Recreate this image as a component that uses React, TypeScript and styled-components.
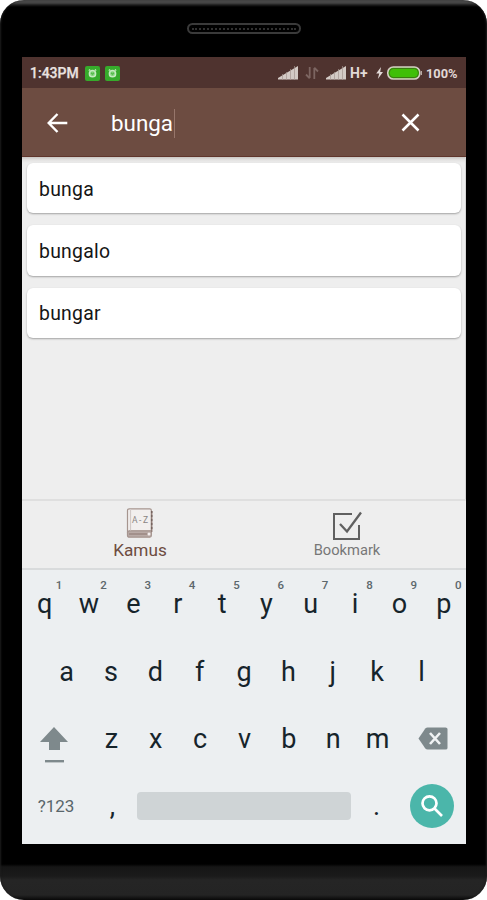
import React from "react";
import styled, { createGlobalStyle } from "styled-components";

const Global = createGlobalStyle`
  * { box-sizing: border-box; }
  body { margin: 0; background: #fff; font-family: Roboto, "Liberation Sans", sans-serif; }
`;

const Phone = styled.div`
  width: 487px;
  height: 900px;
  padding: 0 21px 0 22px;
  border-radius: 24px;
  overflow: hidden;
  background: linear-gradient(180deg, #4a4a4a 0, #444 3px, #1c1c1c 5px, #000 7px, #000 864px, #161616 867px, #1a1a1a 876px, #252525 880px, #242424 895px, #080808 900px);
  box-shadow: inset 2px 0 2px -1px #1d1d1d, inset -2px 0 2px -1px #1d1d1d;
  display: flex;
  flex-direction: column;
`;

const TopBezel = styled.div`
  height: 57px;
  flex: none;
  display: flex;
  justify-content: center;
  padding-top: 23px;
`;

const Speaker = styled.div`
  width: 114px;
  height: 11px;
  border: 2px solid #3a3a3a;
  border-radius: 6px;
  padding: 3px 3px 0;
  &::before {
    content: "";
    display: block;
    border-top: 2px dotted #303030;
  }
`;

const Screen = styled.main`
  width: 444px;
  height: 787px;
  flex: none;
  display: flex;
  flex-direction: column;
  background: #eee;
`;

const StatusBar = styled.header`
  height: 31px;
  flex: none;
  display: flex;
  align-items: center;
  padding: 1px 8px 0 8px;
  background: #4f332f;
  color: #e2d9d7;
  font-size: 13.3px;
  font-weight: 700;
  svg { display: block; flex: none; }
`;

const Clock = styled.span`
  width: 55px;
  color: #e9e2e0;
  font-weight: 500;
  font-size: 14px;
  -webkit-text-stroke: 0.25px #e9e2e0;
`;

const Notifications = styled.div`
  display: flex;
  gap: 5px;
  flex: 1;
`;

const StatusIcons = styled.div`
  display: flex;
  align-items: center;
  width: 180px;
`;

const StatusGap = styled.span`
  display: flex;
  justify-content: center;
  width: 28px;
`;

const Network = styled.span`
  width: 30px;
  flex: none;
  padding-left: 4px;
  font-size: 14px;
`;

const Percent = styled.span`
  padding-left: 4px;
  font-size: 12.8px;
`;

const SearchBar = styled.div`
  height: 69px;
  flex: none;
  display: flex;
  align-items: center;
  background: #6d4c41;
  border-bottom: 1px solid #5f352b;
  color: #fff;
  padding: 1px 46px 0 24px;
  svg { display: block; flex: none; }
`;

const Query = styled.div`
  flex: 1;
  display: flex;
  align-items: center;
  margin-left: 42px;
  padding-top: 1px;
  font-size: 22.4px;
  line-height: 28px;
  &::after {
    content: "";
    width: 1px;
    height: 29px;
    margin-left: 1px;
    background: #97766b;
  }
`;

const Results = styled.section`
  flex: 1;
  padding: 6px 4px 0 5px;
  display: flex;
  flex-direction: column;
  gap: 12px;
  background: linear-gradient(#c9c6c3 0, #e4e3e2 3px, #eee 6px);
  border-right: 1px solid #d5d5d5;
`;

const Card = styled.div`
  height: 50.3px;
  flex: none;
  display: flex;
  align-items: center;
  padding: 2px 12px 0;
  border-radius: 6px;
  background: #fff;
  box-shadow: 0 1px 2px rgba(0, 0, 0, 0.32);
  color: #151515;
  font-size: 19.4px;
  letter-spacing: 0.25px;
`;

const Tabs = styled.nav`
  height: 71px;
  flex: none;
  display: grid;
  grid-template-columns: 236px 178px;
  border-top: 2px solid #dfdfdf;
  border-bottom: 2px solid #d9dbdc;
  background: #eee;
`;

const Tab = styled.div<{ $active?: boolean }>`
  display: flex;
  flex-direction: column;
  align-items: center;
  padding-top: ${(p) => (p.$active ? "6px" : "10px")};
  gap: 1px;
  color: ${(p) => (p.$active ? "#6d4c41" : "#777")};
  font-size: ${(p) => (p.$active ? "17.2px" : "14.7px")};
  line-height: ${(p) => (p.$active ? "20px" : "17px")};
  svg { display: block; }
`;

const Keyboard = styled.section`
  height: 274px;
  flex: none;
  display: grid;
  grid-template-rows: 68px 67px 67px 72px;
  background: #eceff1;
  color: #16242b;
`;

const KeyRow = styled.div<{ $inset?: boolean }>`
  display: flex;
  padding: 0 ${(p) => (p.$inset ? "22px" : "0")};
`;

const Key = styled.div<{ $wide?: boolean }>`
  position: relative;
  width: ${(p) => (p.$wide ? "66.8px" : "44.35px")};
  flex: none;
  display: flex;
  justify-content: center;
  align-items: center;
  padding-left: 1px;
  font-size: 27px;
  svg { display: block; }
`;

const Hint = styled.sup`
  position: absolute;
  right: 4px;
  top: 9px;
  color: #5c676c;
  font-size: 11.5px;
  font-weight: 500;
  line-height: 13px;
`;

const ShiftSlot = styled.span`
  padding: 12px 4px 0 0;
`;

const BottomRow = styled.div`
  display: flex;
  align-items: center;
  padding: 0 12px 5px 0;
`;

const SymbolKey = styled.div`
  width: 68px;
  text-align: center;
  color: #59666b;
  font-size: 17px;
`;

const Punctuation = styled.div<{ $width: number }>`
  width: ${(p) => p.$width}px;
  padding: 1px 2px 0 0;
  text-align: center;
  font-size: 27px;
  line-height: 34px;
`;

const SpaceBar = styled.div`
  width: 214px;
  height: 28px;
  border-radius: 4px;
  background: #cfd4d6;
`;

const SearchKey = styled.button`
  width: 44px;
  height: 44px;
  margin-left: auto;
  padding: 0;
  border: 0;
  border-radius: 50%;
  display: grid;
  place-items: center;
  background: #4bb6aa;
`;

const AlarmBadge = () => (
  <svg width="15" height="15" viewBox="0 0 15 15">
    <rect width="15" height="15" rx="2" fill="#36ab2b" />
    <circle cx="7.5" cy="7.7" r="3.1" fill="#7fd277" stroke="#c6ebc0" strokeWidth="1.5" />
    <path d="M3.8 4.6 5 3.4M11.2 4.6 10 3.4" stroke="#c6ebc0" strokeWidth="1.3" />
    <path d="M6.2 7 7.5 8 8.8 7" stroke="#36ab2b" fill="none" />
  </svg>
);

const Signal = () => (
  <svg width="20" height="14" viewBox="0 0 20 14">
    <path d="M0 13.5V12L20 0v13.5z" fill="#d3cac5" />
    <path d="M4.5 8v6M8.5 6v8M12.5 3v11M16.5 0v14" stroke="#a3958f" strokeWidth=".7" />
  </svg>
);

const Transfer = () => (
  <svg width="14" height="14" viewBox="0 0 14 14" fill="none" stroke="#7c6561" strokeWidth="1.8">
    <path d="M4.7 1v11M1 8.5l3.7 3.8M9.3 13V2M13 5.5 9.3 1.7" />
  </svg>
);

const Battery = () => (
  <svg width="46" height="14" viewBox="0 0 46 14">
    <path d="M5 1 .2 7.5h3L1.8 13 7 6H4.2z" fill="#e2d9d7" />
    <rect x="11.8" y="1" width="32" height="12" rx="5.5" fill="#40bf08" stroke="#d5cbc5" strokeWidth="1.6" />
    <rect x="13.3" y="2.5" width="29" height="9" rx="4" fill="none" stroke="#3b5c18" strokeWidth=".7" />
    <path d="M45.3 5v4" stroke="#d5cbc5" />
  </svg>
);

const BackArrow = () => (
  <svg width="23" height="22" viewBox="0 0 23 22" fill="none" stroke="#fff" strokeWidth="2.4">
    <path d="M21.3 11H3.5M11.5 2 2.7 11l8.8 9" />
  </svg>
);

const Close = () => (
  <svg width="19" height="19" viewBox="0 0 19 19" stroke="#fff" strokeWidth="2.5">
    <path d="m1.5 1.5 16 16M17.5 1.5l-16 16" />
  </svg>
);

const Dictionary = () => (
  <svg width="28" height="32" viewBox="0 0 28 32" fill="none" stroke="#a6958f" strokeWidth="1.2">
    <path d="M3.2 1.8h20.6a1.5 1.5 0 0 1 1.5 1.5v20.5H3.5a2.2 2.2 0 0 0-2 2V3.5a1.7 1.7 0 0 1 1.7-1.7z" fill="#f2efee" />
    <path d="M4.5 2v22" stroke="#d2cac8" />
    <path d="M1.5 25.5v3a1.7 1.7 0 0 0 1.7 1.7h20.6a2 2 0 0 0 1.6-2V24H3.4a1.9 1.9 0 0 0-1.9 1.5z" fill="#b9aaa6" />
    <path d="M3 27h18.5M25.8 4v21" stroke="#8c7771" />
    <path d="M25.7 4v20" stroke="#75645f" strokeWidth="1.5" strokeDasharray="2 2" />
    <circle cx="23" cy="27" r="1.5" fill="#f4eeee" stroke="none" />
    <text x="6" y="15.5" fill="#8a8583" stroke="none" fontSize="8.5" fontFamily="Roboto" textLength="16">A-Z</text>
  </svg>
);

const Bookmark = () => (
  <svg width="32" height="30" viewBox="0 0 32 30" fill="none" stroke="#606060" strokeWidth="2">
    <path d="M21 3H3v25h25V14" />
    <path d="m9 13 7 7.5L30 1.5" strokeWidth="2.3" />
  </svg>
);

const Shift = () => (
  <svg width="30" height="38" viewBox="0 0 30 38" fill="#7e898c">
    <path d="M15 1 29 16h-8v8H10v-8H1z" />
    <path d="M6 34h19v2.4H6z" />
  </svg>
);

const Backspace = () => (
  <svg width="30" height="23" viewBox="0 0 30 23">
    <path d="m.5 11.5 6.8-10Q8.3.5 9.5.5h18Q29.5.5 29.5 2v19q0 1.5-2 1.5h-18q-1.2 0-2.2-1z" fill="#7e898c" />
    <path d="m12 6 10 11M22 6 12 17" stroke="#f0f3f4" strokeWidth="2.6" />
  </svg>
);

const Magnifier = () => (
  <svg width="24" height="24" viewBox="0 0 24 24" fill="none" stroke="#fff" strokeWidth="2.7">
    <circle cx="9.5" cy="9.3" r="7" />
    <path d="m14.5 14.5 7.5 7.5" />
  </svg>
);

export default function App() {
  return (
    <>
      <Global />
      <Phone>
        <TopBezel><Speaker /></TopBezel>
        <Screen>
          <StatusBar>
            <Clock>1:43PM</Clock>
            <Notifications><AlarmBadge /><AlarmBadge /></Notifications>
            <StatusIcons>
              <Signal />
              <StatusGap><Transfer /></StatusGap>
              <Signal />
              <Network>H+</Network>
              <Battery />
              <Percent>100%</Percent>
            </StatusIcons>
          </StatusBar>
          <SearchBar><BackArrow /><Query>bunga</Query><Close /></SearchBar>
          <Results>
            {["bunga", "bungalo", "bungar"].map((word) => <Card key={word}>{word}</Card>)}
          </Results>
          <Tabs>
            <Tab $active><Dictionary /><span>Kamus</span></Tab>
            <Tab><Bookmark /><span>Bookmark</span></Tab>
          </Tabs>
          <Keyboard>
            <KeyRow>
              {"qwertyuiop".split("").map((k, i) => <Key key={k}>{k}<Hint>{(i + 1) % 10}</Hint></Key>)}
            </KeyRow>
            <KeyRow $inset>{"asdfghjkl".split("").map((k) => <Key key={k}>{k}</Key>)}</KeyRow>
            <KeyRow>
              <Key $wide><ShiftSlot><Shift /></ShiftSlot></Key>
              {"zxcvbnm".split("").map((k) => <Key key={k}>{k}</Key>)}
              <Key $wide><Backspace /></Key>
            </KeyRow>
            <BottomRow>
              <SymbolKey>?123</SymbolKey>
              <Punctuation $width={47}>,</Punctuation>
              <SpaceBar />
              <Punctuation $width={53}>.</Punctuation>
              <SearchKey aria-label="Search"><Magnifier /></SearchKey>
            </BottomRow>
          </Keyboard>
        </Screen>
      </Phone>
    </>
  );
}
